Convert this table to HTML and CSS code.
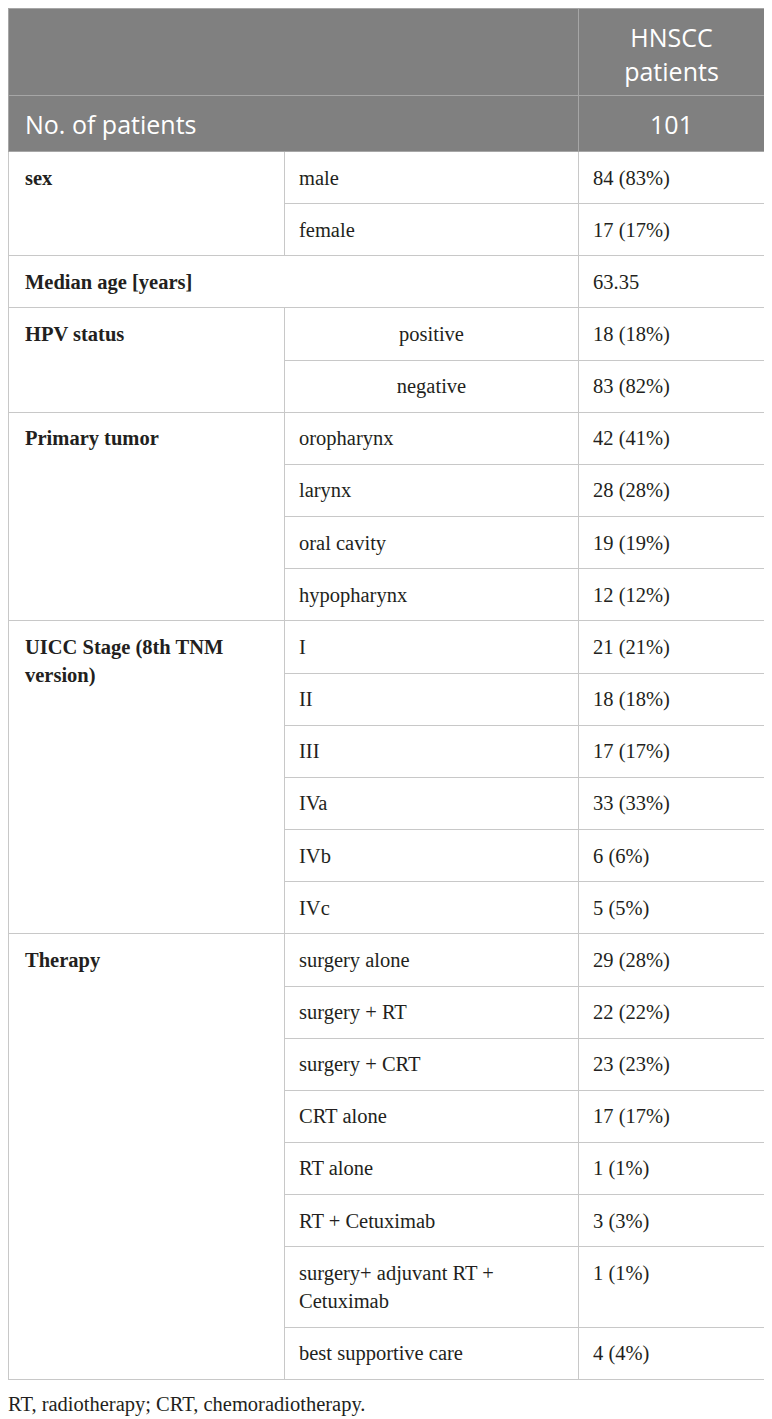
FILE: index.html
```html
<!DOCTYPE html>
<html>
<head>
<meta charset="utf-8">
<link rel="stylesheet" href="styles.css">
</head>
<body>
<table class="tbl">
  <colgroup>
    <col class="c1"><col class="c2"><col class="c3">
  </colgroup>
  <thead>
    <tr class="h1">
      <th colspan="2"></th>
      <th class="hc">HNSCC<br>patients</th>
    </tr>
    <tr class="h2">
      <th colspan="2" class="hl">No. of patients</th>
      <th class="hc">101</th>
    </tr>
  </thead>
  <tbody>
    <tr><td rowspan="2" class="lab">sex</td><td>male</td><td>84 (83%)</td></tr>
    <tr><td>female</td><td>17 (17%)</td></tr>
    <tr><td colspan="2" class="lab">Median age [years]</td><td>63.35</td></tr>
    <tr><td rowspan="2" class="lab">HPV status</td><td class="ctr">positive</td><td>18 (18%)</td></tr>
    <tr><td class="ctr">negative</td><td>83 (82%)</td></tr>
    <tr><td rowspan="4" class="lab">Primary tumor</td><td>oropharynx</td><td>42 (41%)</td></tr>
    <tr><td>larynx</td><td>28 (28%)</td></tr>
    <tr><td>oral cavity</td><td>19 (19%)</td></tr>
    <tr><td>hypopharynx</td><td>12 (12%)</td></tr>
    <tr><td rowspan="6" class="lab">UICC Stage (8th TNM version)</td><td>I</td><td>21 (21%)</td></tr>
    <tr><td>II</td><td>18 (18%)</td></tr>
    <tr><td>III</td><td>17 (17%)</td></tr>
    <tr><td>IVa</td><td>33 (33%)</td></tr>
    <tr><td>IVb</td><td>6 (6%)</td></tr>
    <tr><td>IVc</td><td>5 (5%)</td></tr>
    <tr><td rowspan="8" class="lab">Therapy</td><td>surgery alone</td><td>29 (28%)</td></tr>
    <tr><td>surgery + RT</td><td>22 (22%)</td></tr>
    <tr><td>surgery + CRT</td><td>23 (23%)</td></tr>
    <tr><td>CRT alone</td><td>17 (17%)</td></tr>
    <tr><td>RT alone</td><td>1 (1%)</td></tr>
    <tr><td>RT + Cetuximab</td><td>3 (3%)</td></tr>
    <tr><td>surgery+ adjuvant RT + Cetuximab</td><td>1 (1%)</td></tr>
    <tr><td>best supportive care</td><td>4 (4%)</td></tr>
  </tbody>
</table>
<p class="note">RT, radiotherapy; CRT, chemoradiotherapy.</p>
</body>
</html>
```

FILE: styles.css
```css
body {
  margin: 8px;
  background: #fff;
  font-family: "Liberation Serif", "Times New Roman", serif;
  color: #231f20;
}
.tbl {
  width: 756px;
  border-collapse: collapse;
  table-layout: fixed;
  border: 1px solid #c4c4c4;
}
.c1 { width: 276px; }
.c2 { width: 294px; }
.c3 { width: 186px; }
.tbl thead th {
  background: #808080;
  color: #fff;
  font-family: "Open Sans", "Liberation Sans", sans-serif;
  font-weight: 400;
  font-size: 25px;
  line-height: 34px;
  border: 1px solid #a6a6a6;
  padding: 0 14px;
}
.tbl .h1 th { height: 82px; padding-top: 4px; }
.tbl .h2 th { height: 55px; }
.tbl th.hl { text-align: left; padding-left: 16px; }
.tbl th.hc { text-align: center; }
.tbl td {
  font-size: 20.5px;
  line-height: 28.15px;
  padding: 11.5px 14px 11.5px 14px;
  border: 1px solid #c8c8c8;
  vertical-align: top;
  text-align: left;
}
.tbl td.lab { font-weight: 700; padding-left: 16px; }
.tbl td.ctr { text-align: center; }
.note {
  margin: 12px 0 0 0;
  font-size: 20.5px;
  line-height: 24px;
}
```
